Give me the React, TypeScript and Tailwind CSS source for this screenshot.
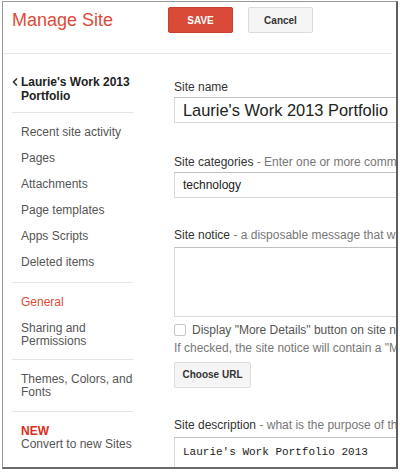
import React from 'react'

const navGroups: { label: string; red?: boolean }[][] = [
  [
    { label: 'Recent site activity' },
    { label: 'Pages' },
    { label: 'Attachments' },
    { label: 'Page templates' },
    { label: 'Apps Scripts' },
    { label: 'Deleted items' }
  ]
]

const Divider = (): JSX.Element => <div className="h-px w-[121px] bg-[#e5e5e5]" />

const Sidebar = (): JSX.Element => (
  <div className="w-[150px] shrink-0 pl-[9px] text-[12px] text-[#555]">
    <div className="flex pt-[21px] pb-[9px]">
      <svg width="9" height="14" viewBox="0 0 9 14" className="-ml-[1px] shrink-0">
        <path d="M6 3.5 L2.5 7 L6 10.5" fill="none" stroke="#333" strokeWidth="1.6" />
      </svg>
      <div className="pl-[1px] font-bold leading-[14px] text-[#222]">
        Laurie&apos;s Work 2013
        <br />
        Portfolio
      </div>
    </div>
    <Divider />
    {navGroups.map((group, i) => (
      <div key={i} className="flex flex-col gap-[13px] py-[13px] pl-[9px] leading-[13px]">
        {group.map((item) => (
          <div key={item.label}>{item.label}</div>
        ))}
      </div>
    ))}
    <Divider />
    <div className="flex flex-col gap-[13px] pt-[13px] pb-[11px] pl-[9px] leading-[13px]">
      <div className="text-[#dd4b39]">General</div>
      <div>
        Sharing and
        <br />
        Permissions
      </div>
    </div>
    <Divider />
    <div className="pt-[13px] pb-[12px] pl-[9px] leading-[13px]">
      Themes, Colors, and
      <br />
      Fonts
    </div>
    <Divider />
    <div className="pt-[13px] pl-[9px] leading-[13px]">
      <div className="font-bold text-[#dd2c20]">NEW</div>
      <div>Convert to new Sites</div>
    </div>
  </div>
)

const Content = (): JSX.Element => (
  <div className="flex min-w-0 flex-1 flex-col pl-[21px] text-[12px] leading-[14px] text-[#333]">
    <div className="mt-[26px]">Site name</div>
    <div className="mt-[3px] flex h-[26px] w-[260px] shrink-0 items-center border border-[#d9d9d9] border-t-[#c0c0c0] pl-[8px] text-[16.4px] text-[#222]">
      Laurie&apos;s Work 2013 Portfolio
    </div>
    <div className="mt-[32px] whitespace-nowrap">
      Site categories <span className="text-[#777]">- Enter one or more comma separated categories</span>
    </div>
    <div className="mt-[3px] flex h-[26px] w-[260px] shrink-0 items-center border border-[#d9d9d9] border-t-[#c0c0c0] pl-[8px] text-[#222]">
      technology
    </div>
    <div className="mt-[30px] whitespace-nowrap">
      Site notice <span className="text-[#777]">- a disposable message that will appear on every page</span>
    </div>
    <div className="mt-[5px] h-[70px] w-[260px] shrink-0 border border-[#d9d9d9] border-t-[#c0c0c0]" />
    <div className="mt-[6px] flex items-center gap-[6px] whitespace-nowrap text-[#555]">
      <div className="h-[12px] w-[12px] shrink-0 rounded-[2px] border border-[#c6c6c6] bg-white" />
      Display &quot;More Details&quot; button on site notice
    </div>
    <div className="mt-[4px] whitespace-nowrap text-[#777]">
      If checked, the site notice will contain a &quot;More Details&quot; link
    </div>
    <div className="mt-[7px] flex h-[26px] w-[77px] shrink-0 items-center justify-center rounded-[2px] border border-[#dcdcdc] bg-[#f5f5f5] text-[10px] font-bold text-[#333]">
      Choose URL
    </div>
    <div className="mt-[30px] whitespace-nowrap">
      Site description <span className="text-[#777]">- what is the purpose of this site?</span>
    </div>
    <div className="mt-[5px] h-[60px] w-[260px] shrink-0 border border-[#d9d9d9] border-t-[#c0c0c0] pl-[8px] pt-[7px] font-['Liberation_Mono',monospace] text-[11px] text-[#222]">
      Laurie&apos;s Work Portfolio 2013
    </div>
  </div>
)

const App: React.FC = (): JSX.Element => {
  return (
    <div className="h-[472px] w-[400px] bg-white font-['Liberation_Sans',Arial,sans-serif]">
      <div className="ml-[2px] mt-[1px] flex h-[468px] w-[396px] flex-col overflow-hidden border-l border-t border-[#9a9a9a] border-r-2 border-b-2 border-r-[#5f5f5f] border-b-[#6a6a6a]">
        <div className="mr-[4px] flex h-[52px] shrink-0 items-start border-b border-[#e5e5e5] pl-[9px] pt-[5px]">
          <div className="mt-[3px] w-[156px] text-[18px] leading-[20px] text-[#dd4b39]">Manage Site</div>
          <div className="flex h-[26px] w-[65px] items-center justify-center rounded-[2px] border border-[#c6402f] bg-[#d94a38] text-[10px] font-bold text-white">
            SAVE
          </div>
          <div className="ml-[15px] flex h-[26px] w-[65px] items-center justify-center rounded-[2px] border border-[#dcdcdc] bg-[#f5f5f5] text-[10px] font-bold text-[#333]">
            Cancel
          </div>
        </div>
        <div className="flex min-h-0 flex-1">
          <Sidebar />
          <Content />
        </div>
      </div>
    </div>
  )
}

export default App
